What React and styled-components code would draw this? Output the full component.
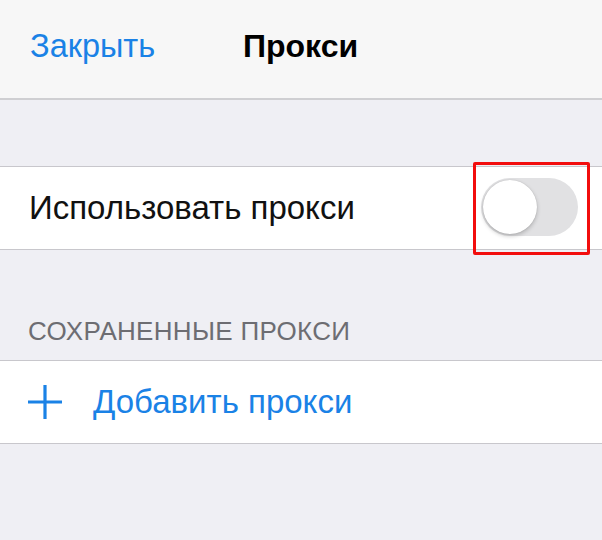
import React from 'react'
import styled, { createGlobalStyle } from 'styled-components'

const GlobalStyle = createGlobalStyle`
  html, body {
    margin: 0;
    padding: 0;
    background: #efeff4;
  }
  body {
    font-family: "Liberation Sans", Arial, sans-serif;
    -webkit-font-smoothing: antialiased;
  }
`

const Screen = styled.div`
  width: 602px;
  height: 540px;
  background: #efeff4;
  overflow: hidden;
  display: flex;
  flex-direction: column;
`

const NavBar = styled.header`
  height: 98px;
  flex: none;
  background: #f7f7f7;
  border-bottom: 2px solid #cfcfd2;
  display: flex;
  align-items: center;
  padding: 0 30px;
  position: relative;
`

const NavButton = styled.span`
  color: #1a82e6;
  font-size: 32.5px;
  padding-bottom: 6px;
`

const NavTitle = styled.span`
  position: absolute;
  left: 243px;
  top: 28px;
  font-size: 32px;
  font-weight: 700;
  color: #000;
`

const Spacer = styled.div`
  height: ${p => p.h}px;
  flex: none;
`

const Group = styled.div`
  background: #fff;
  border-top: 1px solid #c8c7cc;
  border-bottom: 1px solid #c8c7cc;
`

const Row = styled.div`
  height: 82px;
  display: flex;
  align-items: center;
  padding: 0 24px 0 29px;
  gap: 30px;
`

const Label = styled.span`
  flex: 1;
  font-size: 33px;
  color: ${p => (p.accent ? '#1a82e6' : '#111')};
`

const Highlight = styled.div`
  border: 3px solid #f20d0d;
  border-radius: 2px;
  padding: 13px 9px 16px 5px;
  margin-right: -12px;
  margin-top: 0px;
`

const Track = styled.div`
  width: 97px;
  height: 58px;
  border-radius: 29px;
  background: #e1e1e3;
  display: flex;
  align-items: center;
  padding: 0 2px;
  box-sizing: border-box;
`

const Knob = styled.div`
  width: 54px;
  height: 54px;
  border-radius: 50%;
  background: #fff;
  box-shadow: 0 2px 4px rgba(0, 0, 0, 0.22), 0 0 1px rgba(0, 0, 0, 0.2);
`

const SectionHeader = styled.div`
  height: 56px;
  display: flex;
  align-items: flex-end;
  padding: 0 0 13px 28px;
  box-sizing: border-box;
  font-size: 26px;
  color: #6d6d72;
  letter-spacing: 0.3px;
`

const PlusIcon = () => (
  <svg width="36" height="36" viewBox="0 0 36 36" style={{ flex: 'none', marginLeft: -2 }}>
    <path d="M18 1v34M1 18h34" stroke="#1a82e6" strokeWidth="3.2" fill="none" />
  </svg>
)

export default function App() {
  return (
    <Screen>
      <GlobalStyle />
      <NavBar>
        <NavButton>Закрыть</NavButton>
        <NavTitle>Прокси</NavTitle>
      </NavBar>
      <Spacer h={66} />
      <Group>
        <Row>
          <Label>Использовать прокси</Label>
          <Highlight>
            <Track>
              <Knob />
            </Track>
          </Highlight>
        </Row>
      </Group>
      <Spacer h={54} />
      <SectionHeader>СОХРАНЕННЫЕ ПРОКСИ</SectionHeader>
      <Group>
        <Row>
          <PlusIcon />
          <Label accent>Добавить прокси</Label>
        </Row>
      </Group>
    </Screen>
  )
}
